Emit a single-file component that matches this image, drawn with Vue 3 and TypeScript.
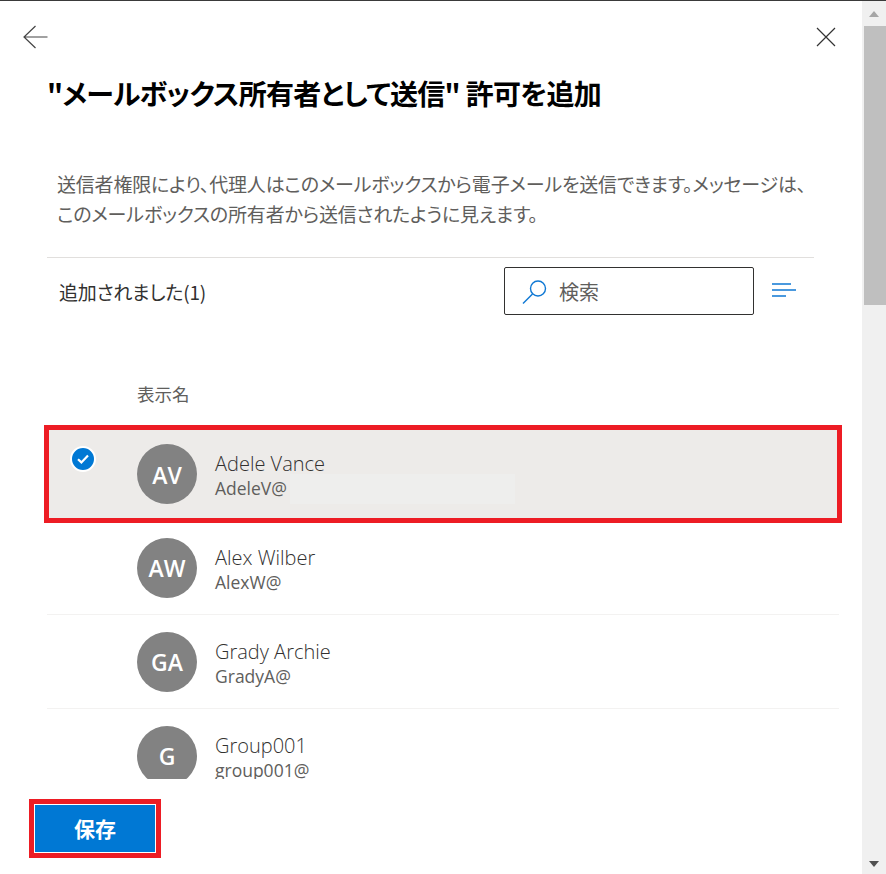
<script setup lang="ts">
interface Person {
  initials: string
  name: string
  mail: string
  selected?: boolean
}
const people: Person[] = [
  { initials: 'AV', name: 'Adele Vance', mail: 'AdeleV@', selected: true },
  { initials: 'AW', name: 'Alex Wilber', mail: 'AlexW@' },
  { initials: 'GA', name: 'Grady Archie', mail: 'GradyA@' },
  { initials: 'G', name: 'Group001', mail: 'group001@' },
]
</script>

<template>
  <div class="page">
    <main class="panel">
      <div class="nav">
        <svg class="back" width="25" height="24" viewBox="0 0 25 24" fill="none" stroke="#444" stroke-width="1.2">
          <path d="M1 12H24.5M12.5 1L1 12L12.5 23" />
        </svg>
        <svg class="close" width="20" height="20" viewBox="0 0 20 20" fill="none" stroke="#333" stroke-width="1.2">
          <path d="M1 1L19 19M19 1L1 19" />
        </svg>
      </div>
      <h1 class="title">"メールボックス所有者として送信" 許可を追加</h1>
      <p class="desc">送信者権限により、代理人はこのメールボックスから電子メールを送信できます。メッセージは、<br />このメールボックスの所有者から送信されたように見えます。</p>
      <div class="toolbar">
        <span class="count">追加されました(1)</span>
        <div class="search">
          <svg width="26" height="25" viewBox="0 0 26 25" fill="none" stroke="#0f78d4" stroke-width="1.4">
            <circle cx="16" cy="9.5" r="7.5" />
            <path d="M10.5 15L1 24.5" />
          </svg>
          <span>検索</span>
        </div>
        <svg class="sort" width="24" height="14" viewBox="0 0 24 14" fill="none" stroke="#0f78d4" stroke-width="1.4">
          <path d="M0 1H19M0 7H24M0 13H14" />
        </svg>
      </div>
      <div class="column">表示名</div>
      <div class="list">
        <div v-for="p in people" :key="p.name" class="row" :class="{ selected: p.selected }">
          <span v-if="p.selected" class="check">
            <svg width="12" height="10" viewBox="0 0 12 10" fill="none" stroke="#fff" stroke-width="2.2">
              <path d="M1 5.2L4.4 8.4L11 1.4" />
            </svg>
          </span>
          <span class="avatar">{{ p.initials }}</span>
          <div class="who">
            <div class="name">{{ p.name }}</div>
            <div class="mail">{{ p.mail }}</div>
          </div>
          <span v-if="p.selected" class="mask"></span>
        </div>
      </div>
      <div class="footer">
        <button class="save" type="button">保存</button>
      </div>
    </main>
    <aside class="scrollbar">
      <span class="arrow up"></span>
      <span class="thumb"></span>
      <span class="arrow down"></span>
    </aside>
  </div>
</template>

<style>
html, body { margin: 0; background: #fff; }
</style>

<style scoped>
.page {
  width: 886px;
  height: 874px;
  box-sizing: border-box;
  border-top: 1px solid #3a3a3a;
  display: flex;
  overflow: hidden;
  font-family: "Noto Sans CJK JP", "Open Sans", sans-serif;
  font-feature-settings: "palt";
  color: #323130;
}
.panel { flex: 1; min-width: 0; display: flex; flex-direction: column; }
.nav {
  height: 49px;
  padding: 24px 26px 0 23px;
  box-sizing: border-box;
  display: flex;
  justify-content: space-between;
  align-items: flex-start;
}
.close { margin-top: 2px; }
.title {
  margin: 21px 0 0 47px;
  font-size: 28px;
  line-height: 44px;
  font-weight: 700;
  letter-spacing: -0.7px;
  color: #000;
  white-space: nowrap;
}
.desc {
  margin: 54px 0 0 57px;
  font-size: 19px;
  line-height: 30px;
  letter-spacing: -0.2px;
  color: #605e5c;
  white-space: nowrap;
}
.toolbar {
  margin: 28px 48px 0 47px;
  height: 58px;
  border-top: 1px solid #e1dfdd;
  padding: 9px 18px 0 12px;
  box-sizing: border-box;
  display: flex;
  align-items: flex-start;
}
.count { font-size: 19px; line-height: 50px; letter-spacing: -0.2px; margin-right: auto; }
.search {
  width: 250px;
  height: 48px;
  box-sizing: border-box;
  border: 1px solid #323130;
  border-radius: 2px;
  padding-left: 17px;
  display: flex;
  align-items: center;
  gap: 11px;
  font-size: 20px;
  color: #605e5c;
  background: #fff;
}
.sort { margin: 16px 0 0 18px; }
.column { margin: 67px 0 0 137px; font-size: 17.5px; line-height: 24px; color: #605e5c; height: 24px; }
.list {
  margin: 19px 20px 0 44px;
  height: 354px;
  overflow: hidden;
}
.row {
  position: relative;
  height: 94px;
  margin: 0 3px 0 3px;
  padding-left: 90px;
  box-sizing: border-box;
  display: flex;
  align-items: center;
  gap: 18px;
  border-bottom: 1px solid #f3f2f1;
}
.row.selected {
  height: 98px;
  margin: 0 0 -2px 0;
  padding-left: 88px;
  border: 5px solid #ed1c24;
  background: #edebe9;
}
.check {
  position: absolute;
  left: 21px;
  top: 16px;
  width: 26px;
  height: 26px;
  box-sizing: border-box;
  border: 2px solid #fff;
  border-radius: 50%;
  background: #0078d4;
  display: flex;
  align-items: center;
  justify-content: center;
}
.avatar {
  width: 60px;
  height: 60px;
  flex: none;
  box-sizing: border-box;
  padding-top: 1px;
  border-radius: 50%;
  background: #828282;
  color: #fff;
  font-family: "Open Sans", sans-serif;
  font-size: 23px;
  font-weight: 600;
  display: flex;
  align-items: center;
  justify-content: center;
}
.who { padding-top: 4px; font-family: "Open Sans", sans-serif; }
.name { font-size: 20px; font-weight: 300; line-height: 25px; color: #323130; }
.mail { font-size: 17.5px; line-height: 25px; color: #605e5c; }
.mask {
  position: absolute;
  left: 241px;
  top: 44px;
  width: 225px;
  height: 30px;
  background: #eeeeed;
}
.footer { padding: 20px 0 0 29px; }
.save {
  display: block;
  width: 132px;
  height: 59px;
  box-sizing: border-box;
  border: 5px solid #ed1c24;
  padding: 0 0 2px;
  background: #0078d4;
  box-shadow: inset 0 0 0 1px #fff;
  color: #fff;
  font: 700 21px "Noto Sans CJK JP", sans-serif;
}
.scrollbar {
  width: 24px;
  flex: none;
  background: #f0f0f0;
  display: flex;
  flex-direction: column;
  align-items: flex-end;
  position: relative;
}
.thumb { width: 22px; height: 279px; margin-top: 25px; background: #bfbfbf; }
.arrow {
  position: absolute;
  left: 7px;
  width: 0;
  height: 0;
  border-left: 5.5px solid transparent;
  border-right: 5.5px solid transparent;
}
.arrow.up { top: 10px; border-bottom: 6px solid #a6a6a6; }
.arrow.down { bottom: 7px; border-top: 6px solid #505050; }
</style>
